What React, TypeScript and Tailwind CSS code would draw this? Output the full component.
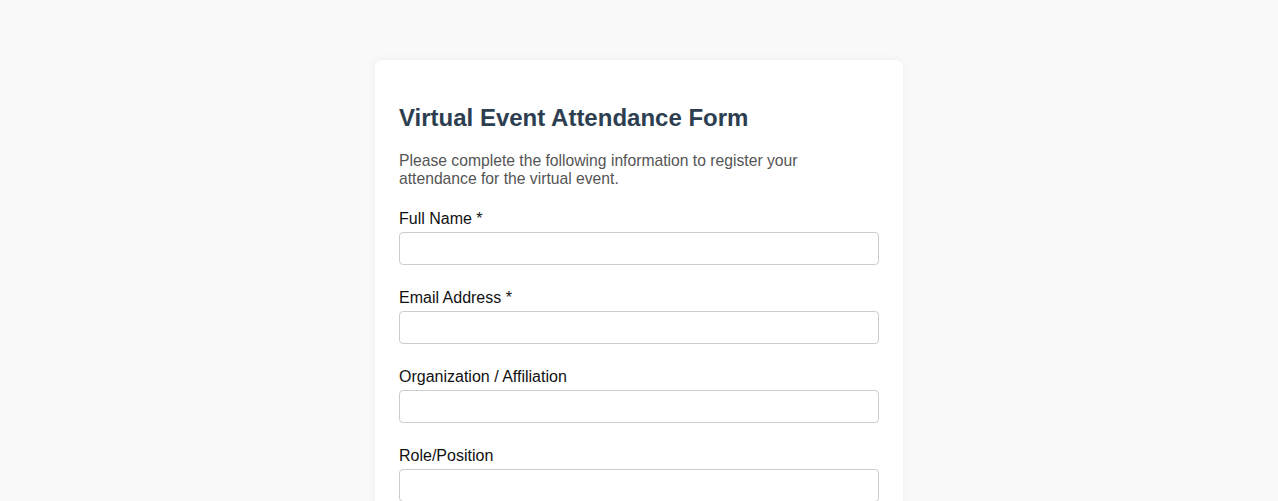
export default function App() {
  const fields = [
    { id: 'fullName', label: 'Full Name *', type: 'text' },
    { id: 'email', label: 'Email Address *', type: 'email' },
    { id: 'org', label: 'Organization / Affiliation', type: 'text' },
    { id: 'role', label: 'Role/Position', type: 'text' },
  ]

  return (
    <div className="min-h-screen bg-[#f9f9f9] pt-[60px] pb-10 font-['Liberation_Sans',Arial,sans-serif]">
      <div className="mx-auto w-[528px] rounded-lg bg-white px-6 pt-6 pb-6 shadow-[0_0_10px_rgba(0,0,0,0.05)]">
        <h2 className="mt-5 mb-5 text-[24px] font-bold leading-[normal] text-[#2c3e50]">
          Virtual Event Attendance Form
        </h2>
        <p className="mb-[22px] text-[15.7px] leading-[18px] text-[#555]">
          Please complete the following information to register your attendance for the virtual event.
        </p>
        <form>
          {fields.map(field => (
            <div key={field.id} className="mb-6">
              <label htmlFor={field.id} className="mb-1 block text-base leading-[18px] text-[#111]">
                {field.label}
              </label>
              <input
                id={field.id}
                type={field.type}
                className="block h-[33px] w-full rounded border border-[#ccc] px-2 text-sm"
              />
            </div>
          ))}
        </form>
      </div>
    </div>
  )
}
